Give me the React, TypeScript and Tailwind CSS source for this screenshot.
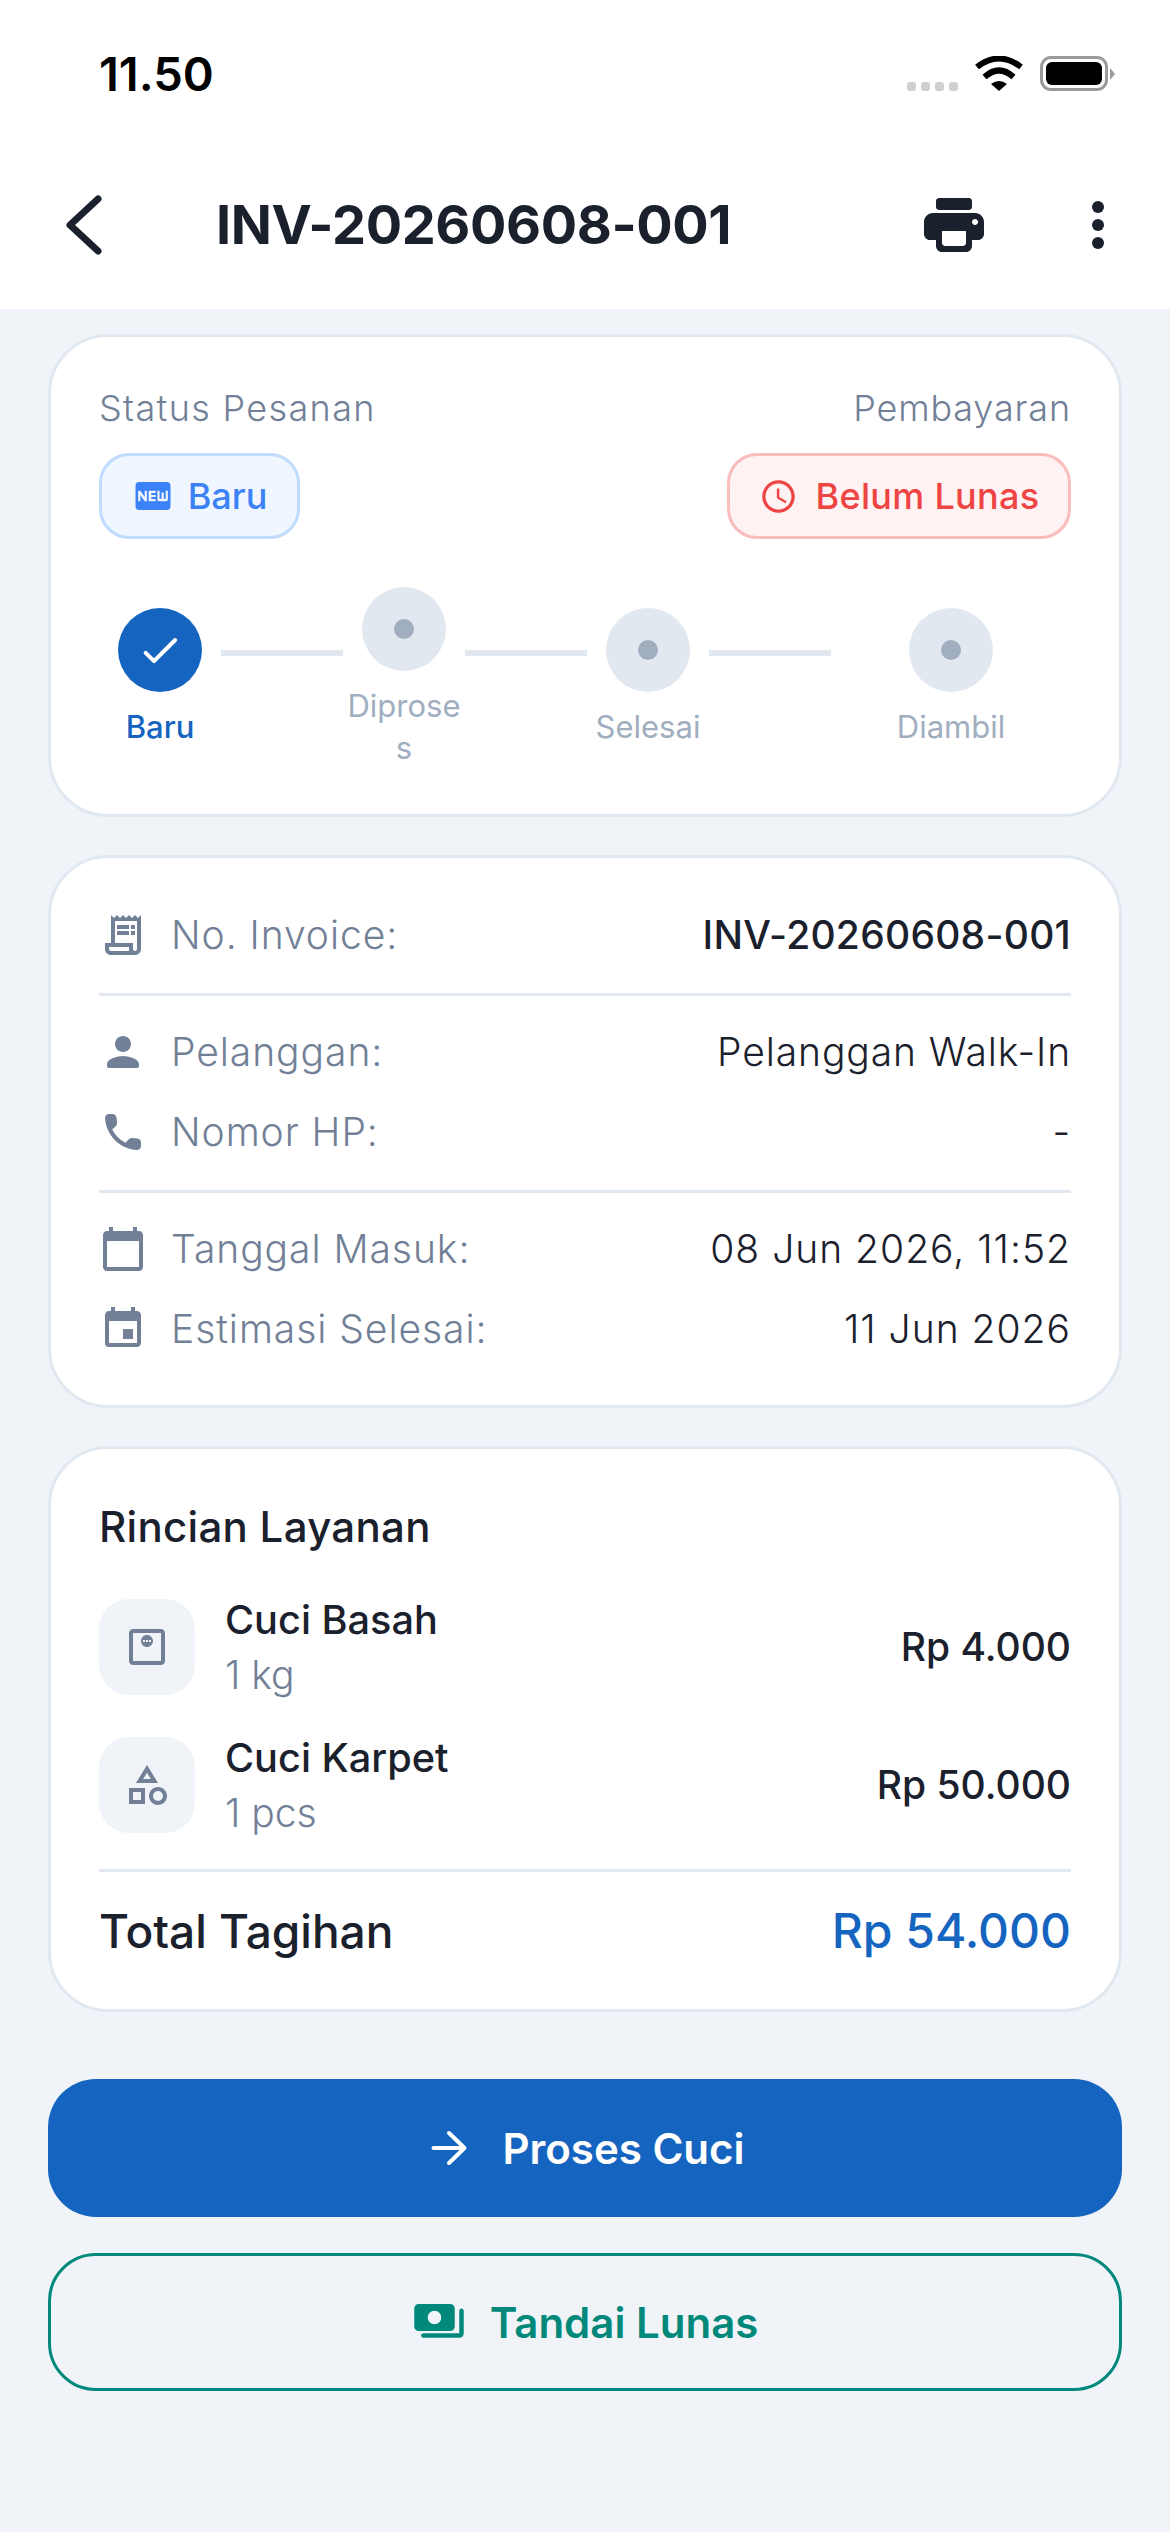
import {
	MdOutlineReceiptLong,
	MdCalendarToday,
	MdEvent,
	MdOutlineMonitorWeight,
	MdOutlineCategory,
	MdFiberNew,
	MdOutlineAccessTime,
} from 'react-icons/md';

const steps = [
	{label: 'Baru', done: true},
	{label: 'Diproses', done: false},
	{label: 'Selesai', done: false},
	{label: 'Diambil', done: false},
];

function StatusBar() {
	return (
		<div className="h-[150px] flex items-start justify-between pl-[99px] pr-[55px]">
			<span className="mt-[47px] text-[47px] leading-[54px] font-semibold text-black">11.50</span>
			<div className="flex items-start mt-[56px]">
				<div className="flex gap-[5px] mt-[26px] mr-[17px]">
					<span className="w-[9px] h-[9px] rounded-[3px] bg-[#cfcfcf]" />
					<span className="w-[9px] h-[9px] rounded-[3px] bg-[#cfcfcf]" />
					<span className="w-[9px] h-[9px] rounded-[3px] bg-[#cfcfcf]" />
					<span className="w-[9px] h-[9px] rounded-[3px] bg-[#cfcfcf]" />
				</div>
				<svg width="48" height="35" viewBox="0 0 48 35" fill="none" className="mr-[17px]">
					<path d="M2 11Q24 -6 46 11" stroke="black" strokeWidth="6" />
					<path d="M9.5 21Q24 8 38.5 21" stroke="black" strokeWidth="6" />
					<path d="M24 35L16 28Q24 22 32 28Z" fill="black" />
				</svg>
				<div className="w-[68px] h-[35px] rounded-[11px] border-[3px] border-[#9a9a9a] p-[3px]">
					<div className="w-full h-full rounded-[6px] bg-black" />
				</div>
				<div className="ml-[2px] mt-[12px] w-0 h-0 border-y-[6px] border-y-transparent border-l-[5px] border-l-[#9a9a9a]" />
			</div>
		</div>
	);
}

function Header() {
	return (
		<div className="h-[159px] bg-white flex items-start pl-[60px] pr-[66px] pt-[39px]">
			<svg width="42" height="60" viewBox="0 0 42 60" fill="none" className="mt-[6px]">
				<path d="M38 4L10 30L38 56" stroke="#1a202c" strokeWidth="7" strokeLinecap="round" strokeLinejoin="round" />
			</svg>
			<h1 className="ml-[114px] text-[54px] leading-[72px] tracking-[-0.4px] font-bold text-[#1a202c]">INV-20260608-001</h1>
			<div className="ml-auto flex items-center">
				<svg width="72" height="72" viewBox="0 0 24 24" fill="#1a202c">
					<path d="M19 8H5c-1.66 0-3 1.34-3 3v4c0 1.1.9 2 2 2h2v2c0 1.1.9 2 2 2h8c1.1 0 2-.9 2-2v-2h2c1.1 0 2-.9 2-2v-4c0-1.66-1.34-3-3-3zm-4 11H9c-.55 0-1-.45-1-1v-4h8v4c0 .55-.45 1-1 1zm4-7c-.55 0-1-.45-1-1s.45-1 1-1 1 .45 1 1-.45 1-1 1zm-2-9H7c-.55 0-1 .45-1 1v2c0 .55.45 1 1 1h10c.55 0 1-.45 1-1V4c0-.55-.45-1-1-1z" />
				</svg>
				<div className="ml-[102px] flex flex-col gap-[6px] items-center">
					<span className="w-[12px] h-[12px] rounded-full bg-[#1a202c]" />
					<span className="w-[12px] h-[12px] rounded-full bg-[#1a202c]" />
					<span className="w-[12px] h-[12px] rounded-full bg-[#1a202c]" />
				</div>
			</div>
		</div>
	);
}

function Stepper() {
	return (
		<div className="flex items-center mt-[48px]">
			{steps.map((step, i) => (
				<div key={step.label} className={i === 3 ? 'flex-1 flex items-center' : 'contents'}>
					<div className={i === 3 ? 'w-full flex flex-col items-center' : 'w-[122px] shrink-0 flex flex-col items-center'}>
						<div
							className={
								step.done
									? 'w-[84px] h-[84px] rounded-full bg-[#1565c0] flex items-center justify-center'
									: 'w-[84px] h-[84px] rounded-full bg-[#e2e8f0] flex items-center justify-center'
							}
						>
							{step.done ? (
								<svg width="48" height="48" viewBox="0 0 24 24" fill="white">
									<path d="M9 16.17 5.53 12.7a.996.996 0 1 0-1.41 1.41l4.18 4.18c.39.39 1.02.39 1.41 0L20.29 7.71a.996.996 0 1 0-1.41-1.41L9 16.17z" />
								</svg>
							) : (
								<span className="w-[20px] h-[20px] rounded-full bg-[#a0aec0]" />
							)}
						</div>
						<div
							className={
								step.done
									? 'mt-[14px] w-[122px] text-center break-all text-[31px] leading-[42px] font-medium text-[#1565c0]'
									: 'mt-[14px] w-[122px] text-center break-all text-[31px] leading-[42px] text-[#a0aec0]'
							}
						>
							{step.label}
						</div>
					</div>
					{i < 3 && <div className="w-[122px] shrink-0 h-[6px] mb-[50px] bg-[#e2e8f0]" />}
				</div>
			))}
		</div>
	);
}

function InfoRow({icon, label, value, kind}: {icon: React.ReactNode; label: string; value: string; kind?: 'bold' | 'date'}) {
	let valueClass = 'ml-auto text-[39px] font-[350] tracking-[0.9px] text-[#1a202c]';
	if (kind === 'bold') valueClass = 'ml-auto text-[39px] tracking-[0.25px] font-[450] text-[#1a202c]';
	if (kind === 'date') valueClass = 'ml-auto text-[39px] font-[350] tracking-[1px] text-[#1a202c]';
	return (
		<div className="h-[58px] flex items-center">
			<span className="w-[48px] h-[48px] shrink-0 text-[#718096]">{icon}</span>
			<span className="ml-[24px] text-[39px] font-[350] tracking-[0.95px] text-[#718096]">{label}</span>
			<span className={valueClass}>{value}</span>
		</div>
	);
}

function ServiceRow({icon, name, qty, price}: {icon: React.ReactNode; name: string; qty: string; price: string}) {
	return (
		<div className="flex items-center h-[96px]">
			<div className="w-[96px] h-[96px] rounded-[30px] bg-[#f0f4f8] flex items-center justify-center text-[#718096]">{icon}</div>
			<div className="ml-[30px]">
				<div className="text-[39.7px] leading-[52px] font-[450] text-[#1a202c]">{name}</div>
				<div className="mt-[4px] text-[39px] leading-[50px] font-[350] text-[#718096]">{qty}</div>
			</div>
			<div className="ml-auto text-[39px] font-[450] text-[#1a202c]">{price}</div>
		</div>
	);
}

export default function App() {
	return (
		<div className="w-[1170px] h-[2532px] bg-[#f0f4f8] font-['Inter',sans-serif]">
			<div className="bg-white">
				<StatusBar />
				<Header />
			</div>

			<div className="px-[48px] pt-[25px]">
				<div className="bg-white border-[3px] border-[#e2e8f0] rounded-[60px] p-[48px] pb-[45px]">
					<div className="flex justify-between">
						<div>
							<div className="text-[36px] leading-[46px] font-[350] tracking-[1.35px] text-[#718096]">Status Pesanan</div>
							<div className="mt-[22px] w-[201px] h-[86px] rounded-[30px] border-[3px] border-[#bfdbfe] bg-[#eff6ff] flex items-center justify-center text-[#3b82f6]">
								<MdFiberNew size={42} />
								<span className="ml-[14px] text-[36px] font-medium">Baru</span>
							</div>
						</div>
						<div className="flex flex-col items-end">
							<div className="text-[36px] leading-[46px] font-[350] tracking-[0.85px] text-[#718096]">Pembayaran</div>
							<div className="mt-[22px] w-[344px] h-[86px] rounded-[30px] border-[3px] border-[#fbbcbc] bg-[#fef2f2] flex items-center justify-center text-[#ef4444]">
								<MdOutlineAccessTime size={39} />
								<span className="ml-[18px] text-[36px] tracking-[0.3px] font-medium">Belum Lunas</span>
							</div>
						</div>
					</div>
					<Stepper />
				</div>

				<div className="mt-[38px] bg-white border-[3px] border-[#e2e8f0] rounded-[60px] p-[48px] pb-[47px]">
					<InfoRow icon={<MdOutlineReceiptLong size={48} />} label="No. Invoice:" value="INV-20260608-001" kind="bold" />
					<div className="h-[3px] bg-[#e2e8f0] mt-[29px] mb-[27px]" />
					<InfoRow
						icon={
							<svg width="48" height="48" viewBox="0 0 24 24" fill="currentColor">
								<path d="M12 12c2.21 0 4-1.79 4-4s-1.79-4-4-4-4 1.79-4 4 1.79 4 4 4zm0 2c-2.67 0-8 1.34-8 4v1c0 .55.45 1 1 1h14c.55 0 1-.45 1-1v-1c0-2.66-5.33-4-8-4z" />
							</svg>
						}
						label="Pelanggan:"
						value="Pelanggan Walk-In"
					/>
					<div className="h-[22px]" />
					<InfoRow
						icon={
							<svg width="48" height="48" viewBox="0 0 24 24" fill="currentColor">
								<path d="M19.23 15.26l-2.54-.29c-.61-.07-1.21.14-1.64.57l-1.84 1.84c-2.83-1.44-5.15-3.75-6.59-6.59l1.85-1.85c.43-.43.64-1.03.57-1.64l-.29-2.52c-.12-1.01-.97-1.77-1.99-1.77H5.03c-1.13 0-2.07.94-2 2.07.53 8.54 7.36 15.36 15.89 15.89 1.13.07 2.07-.87 2.07-2v-1.73c.01-1.01-.75-1.86-1.76-1.98z" />
							</svg>
						}
						label="Nomor HP:"
						value="-"
					/>
					<div className="h-[3px] bg-[#e2e8f0] mt-[29px] mb-[27px]" />
					<InfoRow icon={<MdCalendarToday size={48} />} label="Tanggal Masuk:" value="08 Jun 2026, 11:52" kind="date" />
					<div className="h-[22px]" />
					<InfoRow icon={<MdEvent size={48} />} label="Estimasi Selesai:" value="11 Jun 2026" kind="date" />
				</div>

				<div className="mt-[38px] bg-white border-[3px] border-[#e2e8f0] rounded-[60px] p-[48px]">
					<div className="text-[42px] leading-[60px] tracking-[0.3px] font-[450] text-[#1a202c]">Rincian Layanan</div>
					<div className="mt-[42px] flex flex-col gap-[42px]">
						<ServiceRow icon={<MdOutlineMonitorWeight size={48} />} name="Cuci Basah" qty="1 kg" price="Rp 4.000" />
						<ServiceRow icon={<MdOutlineCategory size={48} />} name="Cuci Karpet" qty="1 pcs" price="Rp 50.000" />
					</div>
					<div className="h-[3px] bg-[#e2e8f0] mt-[36px]" />
					<div className="mt-[29px] flex items-center justify-between">
						<span className="text-[46px] leading-[60px] font-[450] text-[#1a202c]">Total Tagihan</span>
						<span className="text-[48px] leading-[60px] font-[450] text-[#1565c0]">Rp 54.000</span>
					</div>
				</div>

				<button className="mt-[67px] w-full h-[138px] rounded-[48px] bg-[#1565c0] flex items-center justify-center text-white">
					<svg width="48" height="48" viewBox="0 0 48 48" fill="none" stroke="white" strokeWidth="4" strokeLinecap="round" strokeLinejoin="round">
						<path d="M8.5 24H39.5M24 9L39.5 24L24 39" />
					</svg>
					<span className="ml-[29px] text-[42px] font-semibold">Proses Cuci</span>
				</button>
				<button className="mt-[36px] w-full h-[138px] rounded-[48px] border-[3px] border-[#00897b] flex items-center justify-center text-[#00897b]">
					<svg width="54" height="54" viewBox="0 0 24 24" fill="currentColor">
						<path d="M19 14V6c0-1.1-.9-2-2-2H3c-1.1 0-2 .9-2 2v8c0 1.1.9 2 2 2h14c1.1 0 2-.9 2-2zm-9-1c-1.66 0-3-1.34-3-3s1.34-3 3-3 3 1.34 3 3-1.34 3-3 3zm13-6v10c0 1.1-.9 2-2 2H5c-.55 0-1-.45-1-1s.45-1 1-1h16V7c0-.55.45-1 1-1s1 .45 1 1z" />
					</svg>
					<span className="ml-[24px] text-[42px] font-semibold">Tandai Lunas</span>
				</button>
			</div>
		</div>
	);
}
